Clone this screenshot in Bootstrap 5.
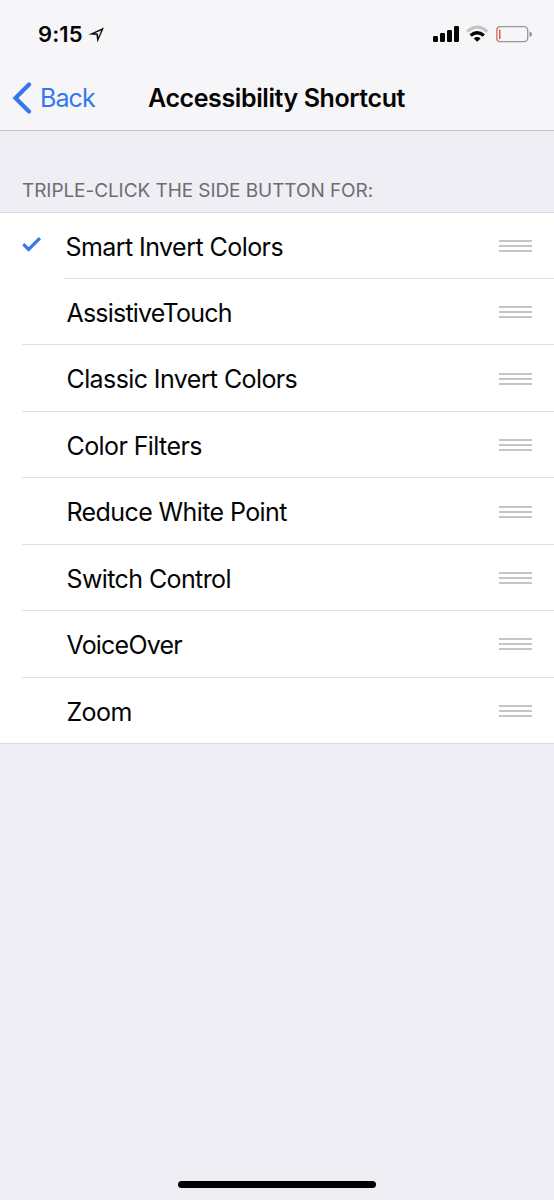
<!DOCTYPE html>
<html lang="en">
<head>
<meta charset="utf-8">
<meta name="viewport" content="width=device-width, initial-scale=1">
<title>Accessibility Shortcut</title>
<link href="https://cdn.jsdelivr.net/npm/bootstrap@5.3.0/dist/css/bootstrap.min.css" rel="stylesheet">
<style>
  body { font-family: Inter, "Liberation Sans", sans-serif; background: #efeef4; color: #050505; }
  .screen { height: 1200px; }
  .top-area { height: 131px; background: #f6f6f8; border-bottom: 1px solid #c4c3c9; }
  .status { height: 66px; padding: 23px 22px 0 38px; }
  .clock { width: 50px; font-size: 22px; font-weight: 600; line-height: 22px; letter-spacing: .1px; }
  .title-bar { height: 64px; }
  .back { width: 148px; padding-left: 12px; color: #3478f0; text-decoration: none; font-size: 25px; line-height: 30px; letter-spacing: -.9px; }
  .back span { margin-left: 8px; }
  .page-title { font-size: 25px; font-weight: 600; line-height: 30px; letter-spacing: -.4px; }
  .section-label { height: 80.6px; padding: 48px 0 0 22px; font-size: 19px; line-height: 24px; letter-spacing: -.07px; color: #6d6d72; }
  .option { height: 66.44px; padding-left: 22px; background: #fff; }
  .option-body { border-top: 1px solid #dfdfe2; padding: 1px 22px 0 44.5px; font-size: 25px; line-height: 30px; letter-spacing: -.6px; }
  .option-body span { padding-top: 1.6px; }
  .tight-label { letter-spacing: -.8px; }
  .option.checked, .option.checked + .option { border-top: 1px solid #dcdce0; }
  .option.checked .option-body { border-top: 0; padding-left: 0; padding-top: 1.5px; }
  .option.checked .option-body span { letter-spacing: -.55px; padding-top: 1px; }
  .option.checked + .option { border-image: linear-gradient(90deg, #fff 65px, #dfdfe2 65px) 1; }
  .option.checked + .option .option-body { border-top: 0; }
  .end-line { height: 1px; background: #dcdce0; }
  .tick { width: 43.4px; }
  .home-bar { width: 198px; height: 7px; margin-bottom: 12px; background: #000; }
</style>
</head>
<body>
<div class="screen d-flex flex-column overflow-hidden">
  <header class="top-area">
    <div class="status d-flex justify-content-between align-items-start">
      <div class="d-flex">
        <span class="clock">9:15</span>
        <svg width="18" height="22" viewBox="88 23 18 22"><path fill-rule="evenodd" d="M88.6 34.6 104 27.4 97.4 42.4 96.4 34.9ZM94.8 33.3 97.9 33.4 98.5 37 101.2 30.4Z" fill="#111"/></svg>
      </div>
      <svg width="100" height="22" viewBox="432 23 100 22">
        <g fill="#050505">
          <rect x="433" y="36" width="5" height="6" rx="1.2"/><rect x="440" y="33" width="5" height="9" rx="1.2"/><rect x="447" y="30" width="5" height="12" rx="1.2"/><rect x="454" y="26" width="5" height="16" rx="1.2"/>
          <path d="M473.8 38.4Q477.2 35.6 480.6 38.4L477.2 41.8Z"/>
        </g>
        <path d="M467.2 31.6Q477.2 22.8 487.2 31.6" fill="none" stroke="#c4c4c6" stroke-width="3.2"/>
        <path d="M470.6 35.5Q477.2 29.8 483.8 35.5" fill="none" stroke="#050505" stroke-width="3.4"/>
        <rect x="496.7" y="26.7" width="31" height="15" rx="3.6" fill="none" stroke="#98989b" stroke-width="1.3"/>
        <path d="M499.6 26.7A3 3 0 0 0 496.7 29.8V38.6A3 3 0 0 0 499.6 41.7" fill="none" stroke="#d9857f" stroke-width="1.3"/>
        <rect x="499" y="29.5" width="1.5" height="9.5" fill="#e0554d"/>
        <path d="M529.5 31.5Q532 32 532 34.2T529.5 37Z" fill="#8e8e91"/>
      </svg>
    </div>
    <nav class="title-bar d-flex align-items-center">
      <a href="#" class="back d-flex align-items-center">
        <svg width="20" height="32" viewBox="0 0 20 32"><path d="M17 2.5 3.5 16 17 29.5" fill="none" stroke="#3478f0" stroke-width="4.2" stroke-linecap="round" stroke-linejoin="miter"/></svg>
        <span>Back</span>
      </a>
      <h1 class="page-title m-0">Accessibility Shortcut</h1>
    </nav>
  </header>

  <main>
    <h2 class="section-label m-0 text-uppercase fw-normal">Triple-click the side button for:</h2>
    <ul class="options list-unstyled m-0"></ul>
    <div class="end-line"></div>
  </main>

  <div class="home-bar rounded-pill mx-auto mt-auto"></div>
</div>
<script src="https://cdn.jsdelivr.net/npm/bootstrap@5.3.0/dist/js/bootstrap.bundle.min.js"></script>
<script>
  const labels = ['Smart Invert Colors', 'AssistiveTouch', 'Classic Invert Colors', 'Color Filters',
    'Reduce White Point', 'Switch Control', 'VoiceOver', 'Zoom'];
  const tight = ['AssistiveTouch', 'VoiceOver'];
  const tick = '<div class="tick d-flex align-items-center"><svg width="20" height="18" viewBox="0 0 20 18"><path d="M1.3 8.2 6.6 13.4 17.9 2.2" fill="none" stroke="#3478f0" stroke-width="3.2"/></svg></div>';
  const grip = '<svg width="33" height="14" viewBox="0 0 33 14"><path d="M0 2H33M0 7H33M0 12H33" stroke="#c5c5c9" stroke-width="2"/></svg>';
  document.querySelector('.options').innerHTML = labels.map((label, i) =>
    `<li class="option d-flex ${i ? '' : 'checked'}">${i ? '' : tick}
      <div class="option-body flex-grow-1 d-flex align-items-center justify-content-between"><span class="${tight.includes(label) ? 'tight-label' : ''}">${label}</span>${grip}</div>
    </li>`).join('');
</script>
</body>
</html>
